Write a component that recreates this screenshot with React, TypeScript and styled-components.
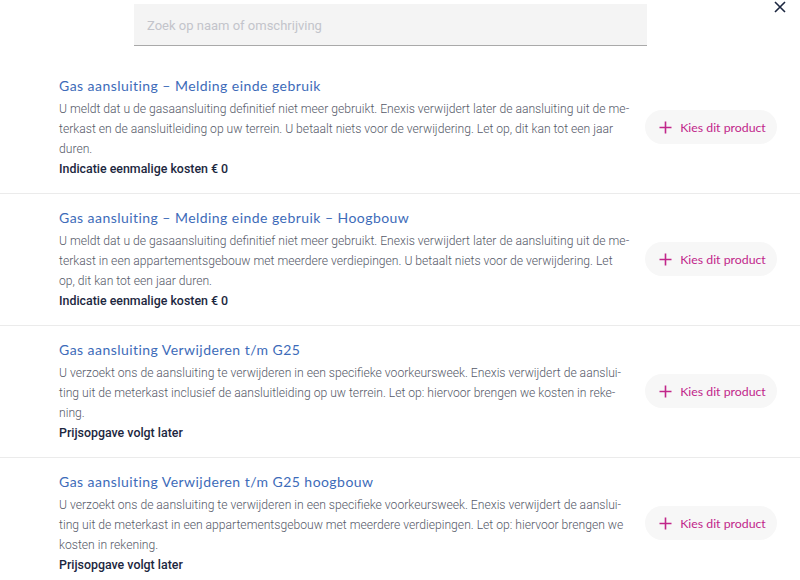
import React from "react";
import styled, { createGlobalStyle } from "styled-components";

const Global = createGlobalStyle`
  html, body { margin: 0; padding: 0; background: #ffffff; }
  body { font-family: Roboto, "Liberation Sans", sans-serif; width: 800px; height: 580px; overflow: hidden; }
`;

const Page = styled.div`
  width: 800px;
  display: flex;
  flex-direction: column;
`;

const Header = styled.div`
  position: relative;
  display: flex;
  padding: 4px 0 16px 134px;
`;

const Search = styled.input`
  width: 513px;
  height: 42px;
  box-sizing: border-box;
  border: none;
  border-bottom: 1px solid #a9a9a9;
  background: #f4f4f4;
  padding: 2px 13px 0;
  font-family: Roboto, sans-serif;
  font-size: 13px;
  color: #333;
  outline: none;
  &::placeholder { color: #c3c4cb; }
`;

const Close = styled.button`
  position: absolute;
  top: 0;
  right: 12px;
  width: 16px;
  height: 14px;
  padding: 0;
  border: none;
  background: none;
  display: flex;
  align-items: center;
  justify-content: center;
`;

const List = styled.div`
  display: flex;
  flex-direction: column;
`;

const Row = styled.div`
  display: flex;
  align-items: center;
  padding: 13px 23px 14px 59px;
  border-bottom: 1px solid #ebebeb;
  gap: 13px;
`;

const Info = styled.div`
  width: 573px;
  display: flex;
  flex-direction: column;
`;

const Title = styled.div`
  font-family: Lato, "Open Sans", sans-serif;
  font-size: 14px;
  letter-spacing: 0.45px;
  line-height: 22px;
  color: #3d6bb9;
  margin-bottom: 2px;
`;

const Desc = styled.div`
  font-family: Roboto, sans-serif;
  font-weight: 300;
  font-size: 12.15px;
  line-height: 20px;
  color: #555968;
`;

const Price = styled.div`
  font-family: Roboto, sans-serif;
  font-weight: 500;
  font-size: 12.4px;
  line-height: 20px;
  color: #1c2740;
`;

const Choose = styled.button`
  width: 132px;
  height: 34px;
  border-radius: 17px;
  border: none;
  background: #f7f7f7;
  display: flex;
  align-items: center;
  justify-content: center;
  gap: 8px;
  font-family: Lato, "Open Sans", sans-serif;
  font-size: 12.3px;
  color: #c1268a;
  padding: 0 0 0 3px;
  flex-shrink: 0;
`;

const items = [
  {
    title: "Gas aansluiting – Melding einde gebruik",
    desc: "U meldt dat u de gasaansluiting definitief niet meer gebruikt. Enexis verwijdert later de aansluiting uit de me\u00ADterkast en de aansluitleiding op uw terrein. U betaalt niets voor de verwijdering. Let op, dit kan tot een jaar duren.",
    price: "Indicatie eenmalige kosten € 0",
  },
  {
    title: "Gas aansluiting – Melding einde gebruik – Hoogbouw",
    desc: "U meldt dat u de gasaansluiting definitief niet meer gebruikt. Enexis verwijdert later de aansluiting uit de me\u00ADterkast in een appartementsgebouw met meerdere verdiepingen. U betaalt niets voor de verwijdering. Let op,\u00A0dit kan tot een jaar duren.",
    price: "Indicatie eenmalige kosten € 0",
  },
  {
    title: "Gas aansluiting Verwijderen t/m G25",
    desc: "U verzoekt ons de aansluiting te verwijderen in een specifieke voorkeursweek. Enexis verwijdert de aanslui\u00ADting uit de meterkast inclusief de aansluitleiding op uw terrein. Let op: hiervoor brengen we kosten in reke\u00ADning.",
    price: "Prijsopgave volgt later",
  },
  {
    title: "Gas aansluiting Verwijderen t/m G25 hoogbouw",
    desc: "U verzoekt ons de aansluiting te verwijderen in een specifieke voorkeursweek. Enexis verwijdert de aanslui\u00ADting uit de meterkast in een appartementsgebouw met meerdere verdiepingen. Let op: hiervoor brengen we kosten in rekening.",
    price: "Prijsopgave volgt later",
  },
];

export default function App() {
  return (
    <Page>
      <Global />
      <Header>
        <Search placeholder="Zoek op naam of omschrijving" />
        <Close aria-label="Sluiten">
          <svg width="12" height="12" viewBox="0 0 12 12">
            <path d="M1 1 L11 11 M11 1 L1 11" stroke="#1c2740" strokeWidth="1.6" fill="none" />
          </svg>
        </Close>
      </Header>
      <List>
        {items.map((it) => (
          <Row key={it.title}>
            <Info>
              <Title>{it.title}</Title>
              <Desc>{it.desc}</Desc>
              <Price>{it.price}</Price>
            </Info>
            <Choose>
              <svg width="13" height="13" viewBox="0 0 13 13">
                <path d="M6.5 0.5 V12.5 M0.5 6.5 H12.5" stroke="#c1268a" strokeWidth="1.6" fill="none" />
              </svg>
              Kies dit product
            </Choose>
          </Row>
        ))}
      </List>
    </Page>
  );
}
